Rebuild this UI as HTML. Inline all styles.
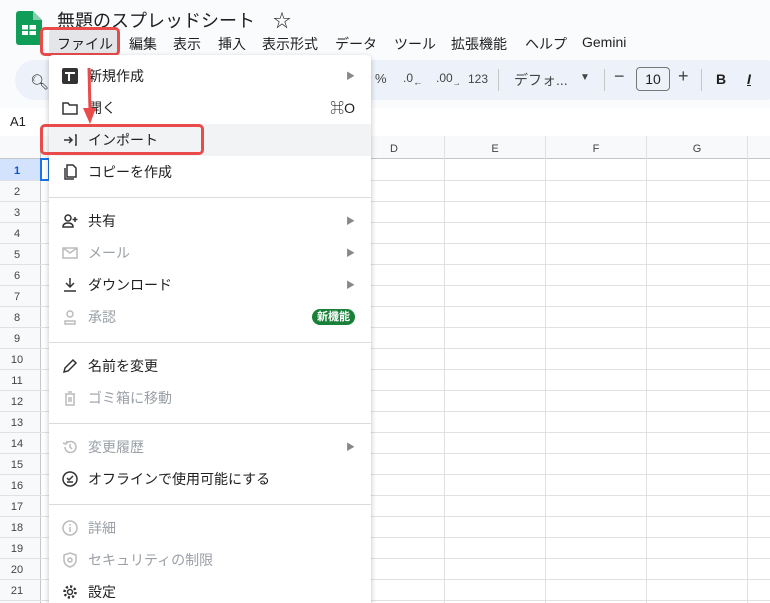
<!DOCTYPE html><html style="width:770px;height:603px;overflow:hidden"><head><meta charset="utf-8"><style>
*{margin:0;padding:0;box-sizing:border-box}
body{width:770px;height:603px;overflow:hidden;background:#f9fbfd;font-family:"Liberation Sans","Noto Sans CJK JP",sans-serif;position:relative;color:#1f1f1f}
.abs{position:absolute}
.menu span{position:absolute;top:34px;font-size:14px;white-space:nowrap}
.grid{position:absolute;left:0;top:136px;width:770px;height:467px;background:#fff}
.item{position:absolute;left:0;width:322px;height:32px;font-size:14px;line-height:32px}
.item .t{position:absolute;left:39px}
.item .ic{position:absolute;left:13px;top:8px;width:16px;height:16px}
.dis{color:#9aa0a6}
.arr{position:absolute;right:16px;top:0;font-size:9px;color:#888}
.sep{position:absolute;left:0;width:322px;height:1px;background:#dadce0}
</style></head><body>
<svg class="abs" style="left:16px;top:11px" width="26" height="34" viewBox="0 0 26 34"><path d="M3 0h14l9 9v22a3 3 0 0 1-3 3H3a3 3 0 0 1-3-3V3a3 3 0 0 1 3-3z" fill="#0f9d58"/><path d="M17 0v9h9z" fill="#87ceac"/><rect x="6" y="14" width="14" height="10" fill="#fff"/><rect x="12" y="14" width="1.5" height="10" fill="#0f9d58"/><rect x="6" y="18.5" width="14" height="1.5" fill="#0f9d58"/></svg>
<div class="abs" style="left:57px;top:7px;font-size:18px;color:#1f1f1f">無題のスプレッドシート</div>
<div class="abs" style="left:273px;top:7px;font-size:18px">☆</div>
<div class="menu">
<div class="abs" style="left:49px;top:29px;width:68px;height:26px;background:#e3e5e8;border-radius:4px"></div>
<span style="left:57px">ファイル</span><span style="left:129px">編集</span><span style="left:173px">表示</span><span style="left:218px">挿入</span><span style="left:262px">表示形式</span><span style="left:335px">データ</span><span style="left:394px">ツール</span><span style="left:451px">拡張機能</span><span style="left:525px">ヘルプ</span><span style="left:582px">Gemini</span>
</div>
<div class="abs" style="left:40px;top:27px;width:80px;height:29px;border:3px solid #e94b4b;border-radius:5px"></div>
<div class="abs" style="left:15px;top:60px;width:770px;height:40px;background:#edf2fa;border-radius:20px"></div>
<div class="abs" style="left:30px;top:73px;font-size:15px">&#x1F50D;&#xFE0E;</div>
<div class="abs" style="left:375px;top:71px;font-size:13px;color:#444">%</div>
<div class="abs" style="left:403px;top:71px;font-size:12px;color:#444">.0<sub>←</sub></div>
<div class="abs" style="left:436px;top:71px;font-size:12px;color:#444">.00<sub style="font-size:8px">→</sub></div>
<div class="abs" style="left:468px;top:72px;font-size:12px;color:#444">123</div>
<div class="abs" style="left:498px;top:69px;width:1px;height:22px;background:#c7c7c7"></div>
<div class="abs" style="left:514px;top:70px;font-size:14px;color:#444">デフォ...</div>
<div class="abs" style="left:580px;top:72px;font-size:10px;color:#444">▼</div>
<div class="abs" style="left:604px;top:69px;width:1px;height:22px;background:#c7c7c7"></div>
<div class="abs" style="left:614px;top:66px;font-size:18px;color:#444">−</div>
<div class="abs" style="left:636px;top:67px;width:34px;height:24px;border:1px solid #747775;border-radius:4px;font-size:14px;text-align:center;line-height:22px">10</div>
<div class="abs" style="left:678px;top:66px;font-size:18px;color:#444">+</div>
<div class="abs" style="left:701px;top:69px;width:1px;height:22px;background:#c7c7c7"></div>
<div class="abs" style="left:716px;top:71px;font-size:14px;font-weight:bold">B</div>
<div class="abs" style="left:747px;top:71px;font-size:14px;font-style:italic;font-weight:bold;text-decoration:underline">I</div>
<div class="abs" style="left:0;top:108px;width:770px;height:28px;background:#fff"></div>
<div class="abs" style="left:10px;top:114px;font-size:13px">A1</div>
<div class="grid">
<svg width="770" height="467" style="position:absolute;left:0;top:0">
<rect x="0" y="0" width="770" height="22" fill="#f8f9fa"/>
<rect x="0" y="0" width="41" height="467" fill="#f8f9fa"/>
<rect x="0" y="23" width="41" height="21" fill="#d3e3fd"/>
<g stroke="#e1e1e1" stroke-width="1">
<line x1="0" y1="22.5" x2="770" y2="22.5" stroke="#c4c7c5"/>
<line x1="40.5" y1="0" x2="40.5" y2="467" stroke="#c4c7c5"/>
<line x1="444.5" y1="0" x2="444.5" y2="467"/><line x1="545.5" y1="0" x2="545.5" y2="467"/><line x1="646.5" y1="0" x2="646.5" y2="467"/><line x1="747.5" y1="0" x2="747.5" y2="467"/>
</g>
<g stroke="#e1e1e1">
<line x1="0" y1="44.5" x2="770" y2="44.5"/><line x1="0" y1="65.5" x2="770" y2="65.5"/><line x1="0" y1="86.5" x2="770" y2="86.5"/><line x1="0" y1="107.5" x2="770" y2="107.5"/><line x1="0" y1="128.5" x2="770" y2="128.5"/><line x1="0" y1="149.5" x2="770" y2="149.5"/><line x1="0" y1="170.5" x2="770" y2="170.5"/><line x1="0" y1="191.5" x2="770" y2="191.5"/><line x1="0" y1="212.5" x2="770" y2="212.5"/><line x1="0" y1="233.5" x2="770" y2="233.5"/><line x1="0" y1="254.5" x2="770" y2="254.5"/><line x1="0" y1="275.5" x2="770" y2="275.5"/><line x1="0" y1="296.5" x2="770" y2="296.5"/><line x1="0" y1="317.5" x2="770" y2="317.5"/><line x1="0" y1="338.5" x2="770" y2="338.5"/><line x1="0" y1="359.5" x2="770" y2="359.5"/><line x1="0" y1="380.5" x2="770" y2="380.5"/><line x1="0" y1="401.5" x2="770" y2="401.5"/><line x1="0" y1="422.5" x2="770" y2="422.5"/><line x1="0" y1="443.5" x2="770" y2="443.5"/><line x1="0" y1="464.5" x2="770" y2="464.5"/>
</g>
<rect x="41" y="23" width="8" height="21" fill="none" stroke="#1a73e8" stroke-width="2"/>
<g font-family="Liberation Sans" font-size="11" fill="#444" text-anchor="middle">
<text x="394" y="16">D</text><text x="495" y="16">E</text><text x="596" y="16">F</text><text x="697" y="16">G</text>
<text x="17" y="38" font-weight="bold" fill="#0b57d0">1</text><text x="17" y="59">2</text><text x="17" y="80">3</text><text x="17" y="101">4</text><text x="17" y="122">5</text><text x="17" y="143">6</text><text x="17" y="164">7</text><text x="17" y="185">8</text><text x="17" y="206">9</text><text x="17" y="227">10</text><text x="17" y="248">11</text><text x="17" y="269">12</text><text x="17" y="290">13</text><text x="17" y="311">14</text><text x="17" y="332">15</text><text x="17" y="353">16</text><text x="17" y="374">17</text><text x="17" y="395">18</text><text x="17" y="416">19</text><text x="17" y="437">20</text><text x="17" y="458">21</text>
</g></svg>
</div>
<div class="abs" style="left:49px;top:55px;width:322px;height:548px;background:#fff;border-radius:4px 4px 0 0;box-shadow:0 2px 6px rgba(0,0,0,.25)">
<div class="item" style="top:5px"><svg class="ic" viewBox="0 0 16 16"><rect x="0" y="0" width="16" height="16" rx="2" fill="#333"/><path d="M3 5h10M7 5v8" stroke="#fff" stroke-width="2"/></svg><span class="t">新規作成</span><span class="arr">▶</span></div>
<div class="item" style="top:37px"><svg class="ic" viewBox="0 0 16 16"><path d="M1 3h5l1.5 2H15v9H1z" fill="none" stroke="#333" stroke-width="1.5"/></svg><span class="t">開く</span><span style="position:absolute;right:16px;font-size:14px">⌘O</span></div>
<div class="item" style="top:69px;background:#f1f3f4"><svg class="ic" viewBox="0 0 16 16"><path d="M2 8h8M7 5l3 3-3 3M13 3h1v10h-1" fill="none" stroke="#333" stroke-width="1.5"/></svg><span class="t">インポート</span></div>
<div class="item" style="top:101px"><svg class="ic" viewBox="0 0 16 16"><path d="M3 4v11h9M5 1h6l3 3v9H5z" fill="none" stroke="#333" stroke-width="1.5"/></svg><span class="t">コピーを作成</span></div>
<div class="sep" style="top:142px"></div>
<div class="item" style="top:150px"><svg class="ic" viewBox="0 0 16 16"><circle cx="6" cy="5" r="3" fill="none" stroke="#333" stroke-width="1.5"/><path d="M1 14c0-3 2-4 5-4s5 1 5 4zM13 4v5M10.5 6.5h5" fill="none" stroke="#333" stroke-width="1.5"/></svg><span class="t">共有</span><span class="arr">▶</span></div>
<div class="item dis" style="top:182px"><svg class="ic" viewBox="0 0 16 16"><rect x="1" y="3" width="14" height="10" fill="none" stroke="#bbb" stroke-width="1.5"/><path d="M1 3l7 5 7-5" fill="none" stroke="#bbb" stroke-width="1.5"/></svg><span class="t">メール</span><span class="arr">▶</span></div>
<div class="item" style="top:214px"><svg class="ic" viewBox="0 0 16 16"><path d="M8 1v9M4 6l4 4 4-4M2 14h12" fill="none" stroke="#333" stroke-width="1.5"/></svg><span class="t">ダウンロード</span><span class="arr">▶</span></div>
<div class="item dis" style="top:246px"><svg class="ic" viewBox="0 0 16 16"><circle cx="8" cy="5" r="3" fill="none" stroke="#bbb" stroke-width="1.5"/><path d="M3 12h10v3H3z" fill="none" stroke="#bbb" stroke-width="1.5"/></svg><span class="t">承認</span><span style="position:absolute;right:16px;top:8px;height:16px;line-height:16px;padding:0 5px;background:#188038;color:#fff;font-size:11px;font-weight:bold;border-radius:8px">新機能</span></div>
<div class="sep" style="top:287px"></div>
<div class="item" style="top:295px"><svg class="ic" viewBox="0 0 16 16"><path d="M2 14l1-4 8-8 3 3-8 8z" fill="none" stroke="#333" stroke-width="1.5"/></svg><span class="t">名前を変更</span></div>
<div class="item dis" style="top:327px"><svg class="ic" viewBox="0 0 16 16"><path d="M3 4h10M6 2h4M4 4v11h8V4M7 7v5M9 7v5" fill="none" stroke="#bbb" stroke-width="1.5"/></svg><span class="t">ゴミ箱に移動</span></div>
<div class="sep" style="top:368px"></div>
<div class="item dis" style="top:376px"><svg class="ic" viewBox="0 0 16 16"><path d="M3 8a5.5 5.5 0 1 0 1.6-3.9M1 4l3 1 1-3M8 5v3l2 2" fill="none" stroke="#bbb" stroke-width="1.5"/></svg><span class="t">変更履歴</span><span class="arr">▶</span></div>
<div class="item" style="top:408px"><svg class="ic" viewBox="0 0 16 16"><circle cx="8" cy="8" r="7" fill="none" stroke="#333" stroke-width="1.5"/><path d="M5 7l2 2 4-4M5 11h6" fill="none" stroke="#333" stroke-width="1.5"/></svg><span class="t">オフラインで使用可能にする</span></div>
<div class="sep" style="top:449px"></div>
<div class="item dis" style="top:457px"><svg class="ic" viewBox="0 0 16 16"><circle cx="8" cy="8" r="7" fill="none" stroke="#bbb" stroke-width="1.5"/><path d="M8 7v5M8 4v1.5" stroke="#bbb" stroke-width="1.5"/></svg><span class="t">詳細</span></div>
<div class="item dis" style="top:489px"><svg class="ic" viewBox="0 0 16 16"><path d="M8 1l6 2v5c0 4-3 6-6 7-3-1-6-3-6-7V3z" fill="none" stroke="#bbb" stroke-width="1.5"/><circle cx="8" cy="8" r="2" fill="none" stroke="#bbb" stroke-width="1.5"/></svg><span class="t">セキュリティの制限</span></div>
<div class="item" style="top:521px"><svg class="ic" viewBox="0 0 16 16"><circle cx="8" cy="8" r="2.5" fill="none" stroke="#333" stroke-width="1.5"/><circle cx="8" cy="8" r="5.5" fill="none" stroke="#333" stroke-width="2.5" stroke-dasharray="2.2 2.1"/></svg><span class="t">設定</span></div>
</div>
<div class="abs" style="left:40px;top:124px;width:164px;height:31px;border:3px solid #e94b4b;border-radius:5px"></div>
<svg class="abs" style="left:80px;top:68px" width="20" height="60"><path d="M9 0L10 44" stroke="#e94b4b" stroke-width="3"/><path d="M3 40l7 16 6-16z" fill="#e94b4b"/></svg>
</body></html>
